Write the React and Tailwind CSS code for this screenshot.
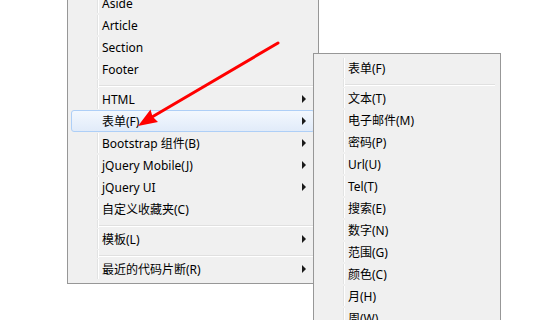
const leftItems = [
  { label: 'Aside' },
  { label: 'Article' },
  { label: 'Section' },
  { label: 'Footer' },
  { sep: true },
  { label: 'HTML', sub: true },
  { label: '表单(F)', sub: true, active: true },
  { label: 'Bootstrap 组件(B)', sub: true },
  { label: 'jQuery Mobile(J)', sub: true },
  { label: 'jQuery UI', sub: true },
  { label: '自定义收藏夹(C)' },
  { sep: true },
  { label: '模板(L)', sub: true },
  { sep: true },
  { label: '最近的代码片断(R)', sub: true },
];

const formItems = [
  { label: '表单(F)' },
  { sep: true },
  { label: '文本(T)' },
  { label: '电子邮件(M)' },
  { label: '密码(P)' },
  { label: 'Url(U)' },
  { label: 'Tel(T)' },
  { label: '搜索(E)' },
  { label: '数字(N)' },
  { label: '范围(G)' },
  { label: '颜色(C)' },
  { label: '月(H)' },
  { label: '周(W)' },
  { label: '日期(D)' },
];

function Gutter({ hidden }) {
  return (
    <div className="flex h-full shrink-0">
      <div className="w-[25px]" />
      <div className={hidden ? 'w-px' : 'w-px bg-[#e2e3e3]'} />
      <div className={hidden ? 'w-px' : 'w-px bg-white'} />
    </div>
  );
}

function MenuRow({ item }) {
  if (item.sep) {
    return (
      <div className="flex h-[8px] px-px">
        <Gutter />
        <div className="flex-1 pt-[5px] pr-[1px]">
          <div className="h-px bg-[#e0e0e0]" />
          <div className="h-px bg-white" />
        </div>
      </div>
    );
  }
  return (
    <div
      className={
        item.active
          ? 'flex h-[22px] items-center rounded-[3px] border border-[#aecff7] bg-linear-to-b from-[#f3f8fe] to-[#e1ebf9]'
          : 'flex h-[22px] items-center border border-transparent'
      }
    >
      <Gutter hidden={item.active} />
      <span className="flex-1 whitespace-nowrap pl-[3px] pt-px leading-[19px] text-black">{item.label}</span>
      {item.sub ? (
        <span className="mr-[8px] h-0 w-0 border-y-[4px] border-l-[4px] border-y-transparent border-l-[#1a1a1a]" />
      ) : null}
    </div>
  );
}

function Menu({ items, className }) {
  return (
    <div className={`absolute border border-[#979797] bg-[#f0f0f0] p-[3px] ${className}`}>
      {items.map((item, i) => (
        <MenuRow key={i} item={item} />
      ))}
    </div>
  );
}

export default function App() {
  return (
    <div
      className="relative h-[320px] w-[559px] overflow-hidden bg-white text-[12px]"
      style={{ fontFamily: '"Noto Sans", "Noto Sans CJK SC", sans-serif' }}
    >
      <Menu items={leftItems} className="left-[67px] top-[-12px] w-[252px]" />
      <Menu items={formItems} className="left-[313px] top-[53px] w-[188px]" />

      <svg className="pointer-events-none absolute inset-0" width="559" height="320" viewBox="0 0 559 320">
        <line x1="278" y1="43" x2="152" y2="117" stroke="#ff0000" strokeWidth="3" strokeLinecap="round" />
        <polygon points="138,126 150.5,109.5 152.5,116.5 158,122" fill="#ff0000" />
      </svg>
    </div>
  );
}
